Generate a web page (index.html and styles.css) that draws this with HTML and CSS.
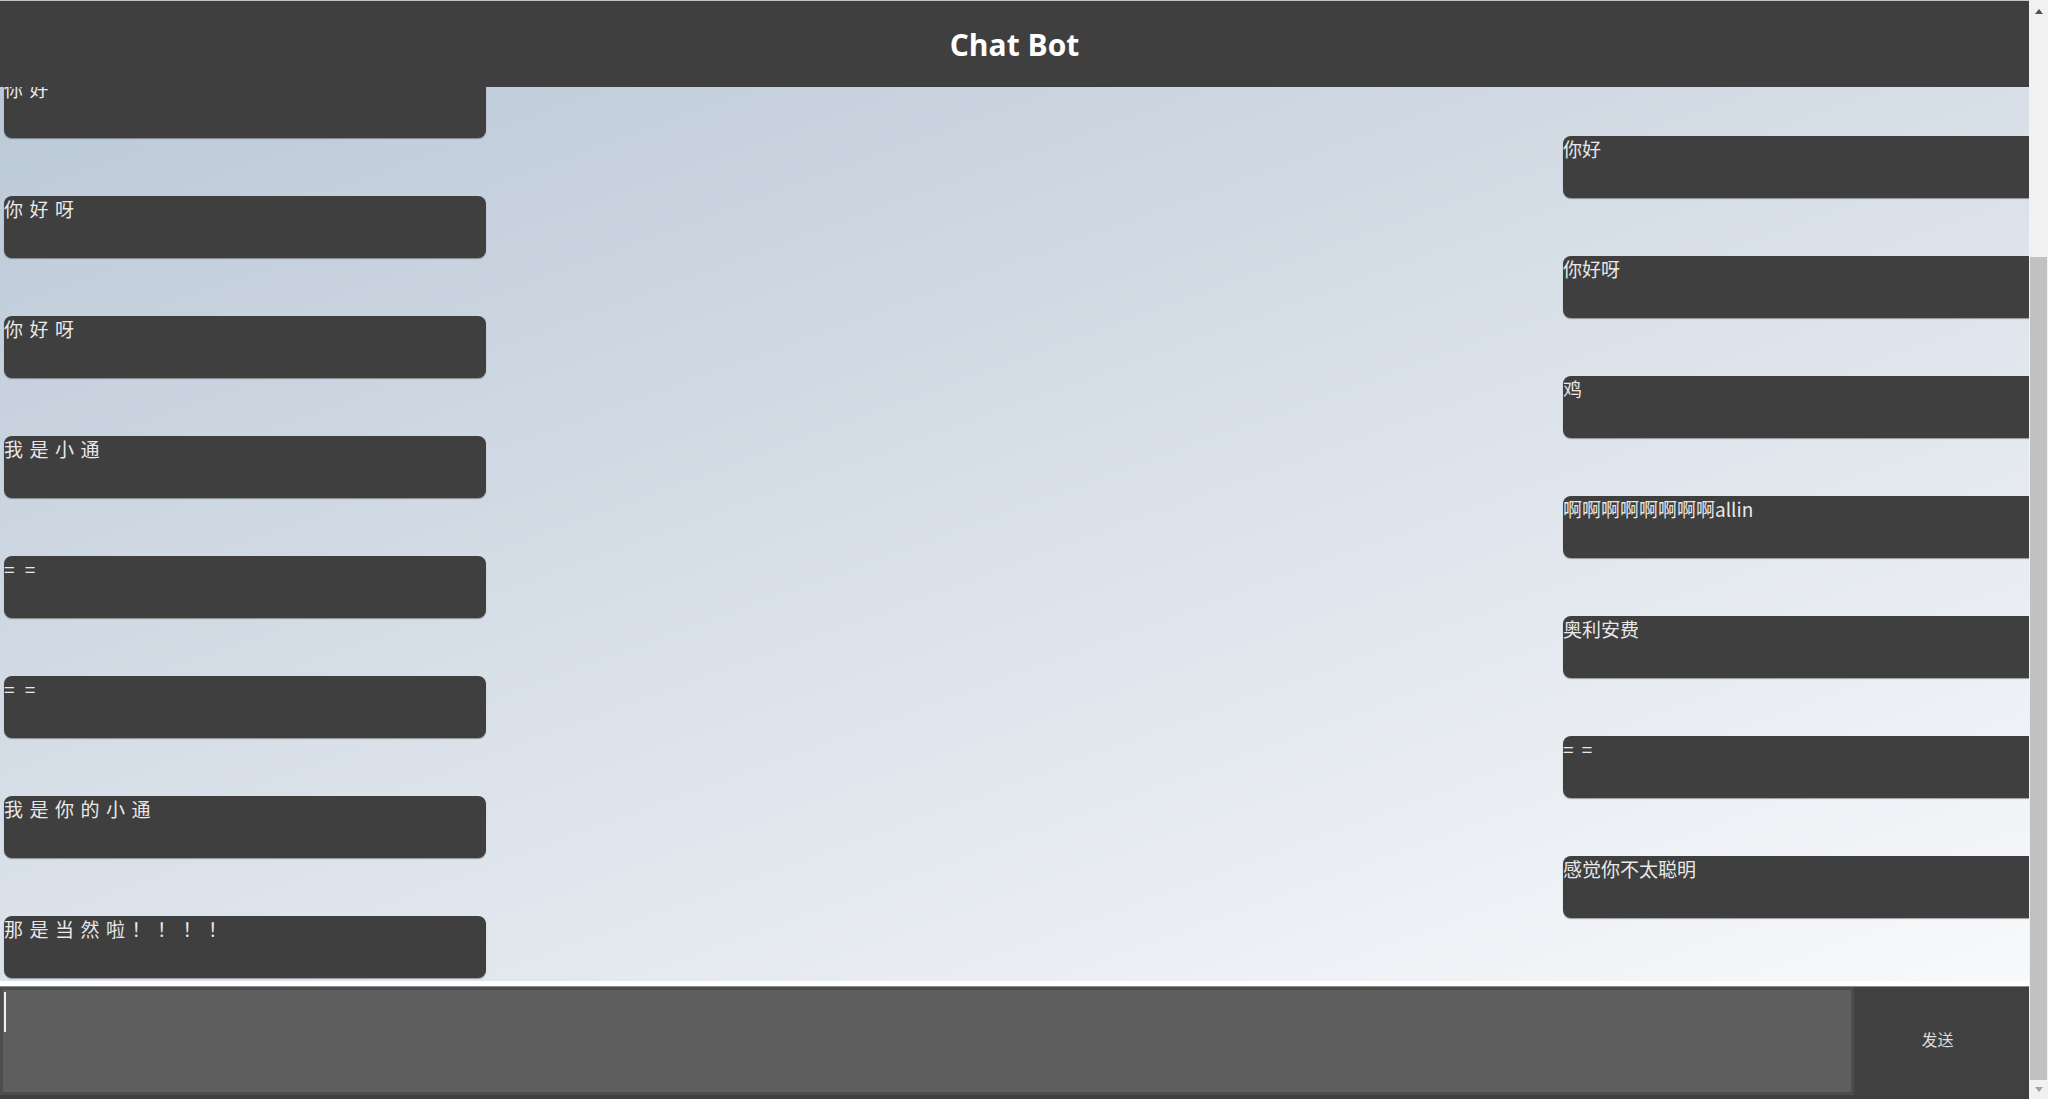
FILE: index.html
```html
<!DOCTYPE html>
<html lang="zh-CN">
<head>
<meta charset="utf-8">
<title>Chat Bot</title>
<link rel="stylesheet" href="styles.css">
</head>
<body>
<div class="window">
  <div class="main">
    <header class="topbar"><h1 class="title">Chat Bot</h1></header>
    <div class="chat">
      <div class="row bot"><div class="bubble">你好</div></div>
      <div class="row user"><div class="bubble">你好</div></div>
      <div class="row bot"><div class="bubble">你好呀</div></div>
      <div class="row user"><div class="bubble">你好呀</div></div>
      <div class="row bot"><div class="bubble">你好呀</div></div>
      <div class="row user"><div class="bubble">鸡</div></div>
      <div class="row bot"><div class="bubble">我是小通</div></div>
      <div class="row user"><div class="bubble">啊啊啊啊啊啊啊啊allin</div></div>
      <div class="row bot"><div class="bubble">= =</div></div>
      <div class="row user"><div class="bubble">奥利安费</div></div>
      <div class="row bot"><div class="bubble">= =</div></div>
      <div class="row user"><div class="bubble">= =</div></div>
      <div class="row bot"><div class="bubble">我是你的小通</div></div>
      <div class="row user"><div class="bubble">感觉你不太聪明</div></div>
      <div class="row bot"><div class="bubble">那是当然啦！！！！</div></div>
    </div>
    <form class="composer">
      <div class="field">
        <textarea class="input" autofocus></textarea>
        <span class="caret"></span>
      </div>
      <button type="button" class="send">发送</button>
    </form>
  </div>
  <div class="scrollbar">
    <div class="sb-btn"><span class="arrow up"></span></div>
    <div class="sb-track"><div class="sb-thumb"></div></div>
    <div class="sb-btn"><span class="arrow down"></span></div>
  </div>
</div>
</body>
</html>
```

FILE: styles.css
```css
* { box-sizing: border-box; }
html, body {
  margin: 0;
  padding: 0;
  height: 1099px;
  overflow: hidden;
  background: #ffffff;
  font-family: "Noto Sans CJK SC", "Noto Sans", sans-serif;
}
.window {
  display: flex;
  width: 2048px;
  height: 1099px;
}
.main {
  position: relative;
  flex: 1;
  display: flex;
  flex-direction: column;
  background: #ffffff;
  min-width: 0;
}
.topbar {
  position: absolute;
  top: 0;
  left: 0;
  right: 0;
  height: 87px;
  border-top: 1px solid #c4c4c4;
  background: #3f3f3f;
  display: flex;
  align-items: center;
  justify-content: center;
  z-index: 2;
}
.title {
  margin: 0;
  color: #ffffff;
  font-family: "Open Sans", "Noto Sans", sans-serif;
  font-weight: 700;
  font-size: 30px;
  line-height: 1;
  padding-top: 1px;
}
.chat {
  height: 981px;
  flex: none;
  overflow: hidden;
  padding-top: 76px;
  background: linear-gradient(160deg, #b8c6d5 0%, #f8f9fb 100%);
}
.row {
  height: 60px;
  display: flex;
}
.row.bot { justify-content: flex-start; padding-left: 4px; }
.row.user { justify-content: flex-end; }
.bubble {
  flex: none;
  width: 482px;
  height: 62px;
  background: #3f3f3f;
  border-radius: 8px;
  box-shadow: 0 1px 1px rgba(0, 0, 0, 0.35);
  color: #e8e8e8;
  font-size: 19px;
  line-height: 26px;
  white-space: pre;
}
.row.bot .bubble { letter-spacing: 6.5px; word-spacing: -7px; }
.row.user .bubble { margin-right: -16px; word-spacing: 4px; }
.composer {
  margin: 5px 0 0;
  height: 113px;
  border-top: 1px solid #8a8a8a;
  background: #404040;
  display: flex;
  align-items: flex-start;
}
.field {
  position: relative;
  width: 1854px;
  height: 108px;
  flex: none;
}
.input {
  display: block;
  width: 100%;
  height: 100%;
  margin: 0;
  padding: 4px 3px;
  border: 3px solid #4d4d4d;
  background: #5e5e5e;
  color: #ffffff;
  caret-color: transparent;
  font-family: "Noto Sans CJK SC", sans-serif;
  font-size: 27px;
  resize: none;
  outline: none;
}
.caret {
  position: absolute;
  left: 4px;
  top: 5px;
  width: 2px;
  height: 40px;
  background: #f0f0f0;
}
.send {
  flex: 1;
  height: 112px;
  margin: 0;
  padding: 0 8px 8px 0;
  border: none;
  background: #404040;
  color: #dcdcdc;
  font-family: "Noto Sans CJK SC", sans-serif;
  font-size: 16px;
}
.scrollbar {
  flex: none;
  width: 19px;
  height: 1099px;
  background: #f1f1f1;
  display: flex;
  flex-direction: column;
}
.sb-btn {
  height: 19px;
  flex: none;
  display: flex;
  align-items: center;
  justify-content: center;
}
.sb-track {
  flex: 1;
  padding: 238px 0 0 1px;
}
.sb-thumb {
  width: 17px;
  height: 823px;
  background: #c1c1c1;
}
.arrow {
  width: 0;
  height: 0;
  border-left: 4.5px solid transparent;
  border-right: 4.5px solid transparent;
}
.arrow.up { border-bottom: 5px solid #505050; margin-top: 4px; }
.arrow.down { border-top: 5px solid #a3a3a3; margin-top: 0; }
```
